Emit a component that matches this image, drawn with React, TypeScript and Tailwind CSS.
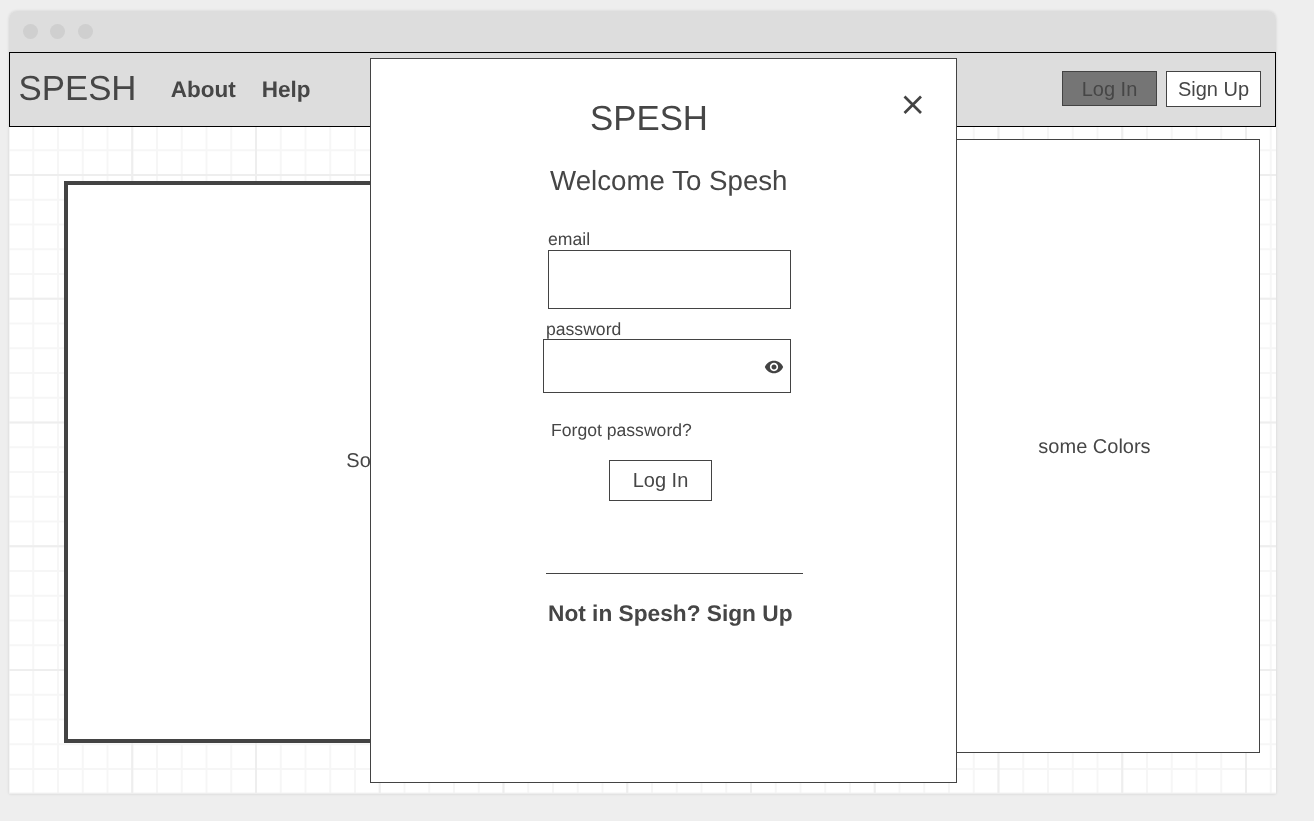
export default function App() {
  return (
    <div className="relative h-[821px] w-[1314px] overflow-hidden bg-[#eeeeee] pl-[9px] pt-[11px] font-['Liberation_Sans',Arial,sans-serif] text-[#464646] will-change-transform [text-rendering:geometricPrecision]">
      <div className="h-[783px] w-[1267px] rounded-t-lg shadow-[0_0_3px_rgba(0,0,0,0.12)]">
        <div className="flex h-[41px] items-center gap-[12.3px] rounded-t-lg bg-[#dddddd] pl-[14px]">
          <span className="h-[15px] w-[15px] rounded-full bg-[#cfcfcf]" />
          <span className="h-[15px] w-[15px] rounded-full bg-[#cfcfcf]" />
          <span className="h-[15px] w-[15px] rounded-full bg-[#cfcfcf]" />
        </div>

        <div className="h-[742px] bg-white bg-[linear-gradient(to_right,#eeeeee_2px,transparent_2px),linear-gradient(to_bottom,#eeeeee_2px,transparent_2px),linear-gradient(to_right,#f6f6f6_2px,transparent_2px),linear-gradient(to_bottom,#f6f6f6_2px,transparent_2px)] bg-[size:123.75px_123.75px,123.75px_123.75px,24.75px_24.75px,24.75px_24.75px] bg-[position:-1.5px_-1.75px]">
          <header className="flex h-[75px] items-center justify-between border border-black bg-[#dddddd] pl-[8.5px] pr-[14px]">
            <div className="flex items-center">
              <span className="mb-[2px] text-[34.8px] leading-[38px]">SPESH</span>
              <a className="ml-[34.2px] text-[22.5px] font-bold">About</a>
              <a className="ml-[26px] text-[22.5px] font-bold">Help</a>
            </div>
            <div className="mb-[1px] flex items-start gap-[9px]">
              <button className="h-[35px] w-[95px] border border-[#434343] bg-[#757575] text-[20px]">Log In</button>
              <button className="h-[36px] w-[95px] border border-[#434343] bg-white text-[20px]">Sign Up</button>
            </div>
          </header>

          <main className="flex items-start justify-between pl-[55px] pr-[16px]">
            <section className="mt-[54px] flex h-[562px] w-[688px] items-center justify-center border-4 border-[#434343] bg-white pb-[3px] text-[20px]">
              Some Images
            </section>
            <section className="mt-[12px] flex h-[614px] w-[331px] items-center justify-center border border-[#434343] bg-white pt-[1px] text-[20px]">
              some Colors
            </section>
          </main>
        </div>
      </div>

      <div className="absolute left-[370px] top-[58px] h-[725px] w-[587px] border border-[#434343] bg-white">
        <button className="absolute left-[530px] top-[34px]">
          <svg width="24" height="24" viewBox="0 0 24 24" fill="none" stroke="#434343" strokeWidth="2.7">
            <path d="M3.5 3.5 20 20M20 3.5 3.5 20" />
          </svg>
        </button>

        <div className="flex flex-col items-start">
          <h1 className="ml-[219px] mt-[41px] text-[34.8px] leading-[38px]">SPESH</h1>
          <h2 className="ml-[179px] mt-[26px] text-[27.7px] leading-[34px]">Welcome To Spesh</h2>

          <label className="ml-[177px] mt-[31px] text-[17.6px] leading-[21px]">email</label>
          <input className="ml-[177px] h-[59px] w-[243px] border border-[#434343] bg-white" />

          <label className="ml-[175px] mt-[10px] text-[17.6px] leading-[20px]">password</label>
          <div className="relative ml-[172px] h-[54px] w-[248px]">
            <input type="password" className="h-full w-full border border-[#434343] bg-white" />
            <svg className="absolute left-[220.5px] top-[18px]" width="20" height="20" viewBox="0 0 24 24" fill="#434343">
              <path d="M12 4.5C7 4.5 2.73 7.61 1 12c1.73 4.39 6 7.5 11 7.5s9.27-3.11 11-7.5c-1.73-4.39-6-7.5-11-7.5zM12 17c-2.76 0-5-2.24-5-5s2.24-5 5-5 5 2.24 5 5-2.24 5-5 5zm0-8c-1.66 0-3 1.34-3 3s1.34 3 3 3 3-1.34 3-3-1.34-3-3-3z" />
            </svg>
          </div>

          <a className="ml-[180px] mt-[27px] text-[17.6px] leading-[20px]">Forgot password?</a>
          <button className="ml-[238px] mt-[20px] h-[41px] w-[103px] border border-[#434343] bg-white pb-[2px] text-[20px]">Log In</button>

          <div className="ml-[175px] mt-[72px] h-px w-[257px] bg-[#434343]" />
          <p className="ml-[177px] mt-[25px] text-[22.7px] font-bold leading-[28px]">Not in Spesh? Sign Up</p>
        </div>
      </div>
    </div>
  );
}
